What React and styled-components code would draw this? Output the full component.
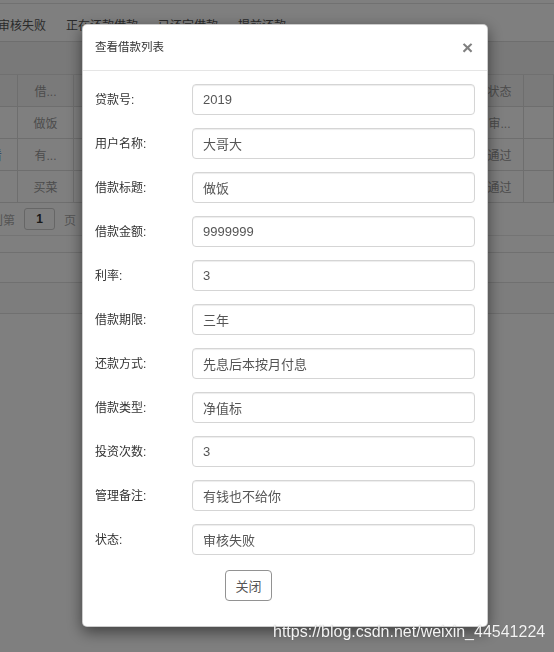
import React from "react";
import styled, { createGlobalStyle } from "styled-components";

const GlobalStyle = createGlobalStyle`
  body {
    margin: 0;
    width: 554px;
    height: 652px;
    overflow: hidden;
    font-family: "Liberation Sans", "Noto Sans CJK SC", sans-serif;
    background: #fff;
  }
`;

const Page = styled.div`
  width: 554px;
  height: 652px;
  background: #fff;
  overflow: hidden;
  display: flex;
  flex-direction: column;
`;

const TopStrip = styled.div`
  height: 3px;
  background: #fff;
  border-bottom: 1px solid #e2e2e2;
`;

const Nav = styled.div`
  height: 38px;
  box-sizing: border-box;
  padding-top: 4px;
  display: flex;
  align-items: center;
  margin-left: -12px;
  border-bottom: 1px solid #ddd;
`;

const Tab = styled.div`
  padding: 0 10px;
  font-size: 12px;
  color: #555;
  white-space: nowrap;
`;

const SubBar = styled.div`
  height: 32px;
  background: #f3f3f3;
  border-bottom: 1px solid #e0e0e0;
`;

const Table = styled.div`
  display: grid;
  grid-template-columns: 18px 56px 1fr 48px 30px;
`;

const Cell = styled.div`
  height: 31px;
  border-right: 1px solid #ddd;
  border-bottom: 1px solid #ddd;
  display: flex;
  align-items: center;
  justify-content: ${(p) => (p.$link ? "flex-end" : "center")};
  padding-right: ${(p) => (p.$link ? "15px" : "0")};
  font-size: 12px;
  color: ${(p) => (p.$link ? "#4a7fc0" : "#999")};
  background: ${(p) => (p.$head ? "#f5f5f5" : "#fff")};
  white-space: nowrap;
  overflow: hidden;
`;

const Pager = styled.div`
  height: 32px;
  display: flex;
  align-items: center;
  gap: 9px;
  margin-left: -9px;
  font-size: 12px;
  color: #aaa;
  border-bottom: 1px solid #e8e8e8;
`;

const PageBox = styled.div`
  width: 29px;
  height: 20px;
  border: 1px solid #ccc;
  border-radius: 3px;
  display: flex;
  align-items: center;
  justify-content: center;
  color: #333;
  font-weight: bold;
`;

const Band = styled.div`
  height: ${(p) => p.$h}px;
  background: ${(p) => p.$bg || "#fff"};
  border-bottom: 1px solid #e0e0e0;
`;

const Backdrop = styled.div`
  position: fixed;
  inset: 0;
  background: rgba(0, 0, 0, 0.5);
  padding: 24px 0 0 82px;
`;

const Modal = styled.div`
  width: 406px;
  box-sizing: border-box;
  background: #fff;
  border: 1px solid rgba(0, 0, 0, 0.2);
  border-radius: 5px;
  box-shadow: 0 5px 15px rgba(0, 0, 0, 0.5);
`;

const Header = styled.div`
  height: 45px;
  padding: 0 14px 0 12px;
  display: flex;
  align-items: center;
  justify-content: space-between;
  border-bottom: 1px solid #e5e5e5;
`;

const Title = styled.div`
  font-size: 11.5px;
  color: #333;
  margin-top: -4px;
`;

const Close = styled.button`
  border: 0;
  background: none;
  padding: 0;
  font-size: 19px;
  font-weight: bold;
  line-height: 1;
  color: #808080;
  font-family: "Liberation Sans", sans-serif;
`;

const Body = styled.div`
  padding: 13px 12px 25px;
`;

const Row = styled.div`
  display: grid;
  grid-template-columns: 97px 283px;
  align-items: center;
  margin-bottom: 13px;
`;

const Label = styled.label`
  font-size: 12px;
  color: #333;
  margin-top: -3px;
`;

const Field = styled.input`
  height: 31px;
  box-sizing: border-box;
  border: 1px solid #d5d5d5;
  border-radius: 4px;
  padding: 0 10px;
  font-size: 13px;
  color: #555;
  font-family: "Liberation Sans", "Noto Sans CJK SC", sans-serif;
  box-shadow: inset 0 1px 1px rgba(0, 0, 0, 0.075);
  outline: none;
`;

const Footer = styled.div`
  padding: 2px 0 0 130px;
`;

const Button = styled.button`
  width: 47px;
  height: 31px;
  border: 1px solid #929292;
  border-radius: 4px;
  background: #fff;
  font-size: 13px;
  color: #555;
  font-family: "Liberation Sans", "Noto Sans CJK SC", sans-serif;
`;

const Watermark = styled.div`
  position: fixed;
  left: 273px;
  top: 623px;
  font-size: 16px;
  color: #f4f4f4;
  text-shadow: 0 0 1px rgba(60, 60, 60, 0.5);
  white-space: nowrap;
`;

const fields = [
  ["贷款号:", "2019"],
  ["用户名称:", "大哥大"],
  ["借款标题:", "做饭"],
  ["借款金额:", "9999999"],
  ["利率:", "3"],
  ["借款期限:", "三年"],
  ["还款方式:", "先息后本按月付息"],
  ["借款类型:", "净值标"],
  ["投资次数:", "3"],
  ["管理备注:", "有钱也不给你"],
  ["状态:", "审核失败"],
];

const rows = [
  ["", "做饭", "", "审...", ""],
  ["看", "有...", "", "通过", ""],
  ["", "买菜", "", "通过", ""],
];

export default function App() {
  return (
    <>
      <GlobalStyle />
      <Page>
        <TopStrip />
        <Nav>
          <Tab>审核失败</Tab>
          <Tab>正在还款借款</Tab>
          <Tab>已还完借款</Tab>
          <Tab>提前还款</Tab>
        </Nav>
        <SubBar />
        <Table>
          <Cell $head></Cell>
          <Cell $head>借...</Cell>
          <Cell $head></Cell>
          <Cell $head>状态</Cell>
          <Cell $head></Cell>
          {rows.map((r, i) =>
            r.map((c, j) => (
              <Cell key={i + "-" + j} $link={j === 0 && c !== ""}>
                {c}
              </Cell>
            ))
          )}
        </Table>
        <Pager>
          <span>到第</span>
          <PageBox>1</PageBox>
          <span>页</span>
        </Pager>
        <Band $h={16} />
        <Band $h={29} />
        <Band $h={30} $bg="#fafafa" />
      </Page>
      <Backdrop>
        <Modal>
          <Header>
            <Title>查看借款列表</Title>
            <Close>×</Close>
          </Header>
          <Body>
            {fields.map(([label, value]) => (
              <Row key={label}>
                <Label>{label}</Label>
                <Field readOnly value={value} />
              </Row>
            ))}
            <Footer>
              <Button>关闭</Button>
            </Footer>
          </Body>
        </Modal>
      </Backdrop>
      <Watermark>https://blog.csdn.net/weixin_44541224</Watermark>
    </>
  );
}
